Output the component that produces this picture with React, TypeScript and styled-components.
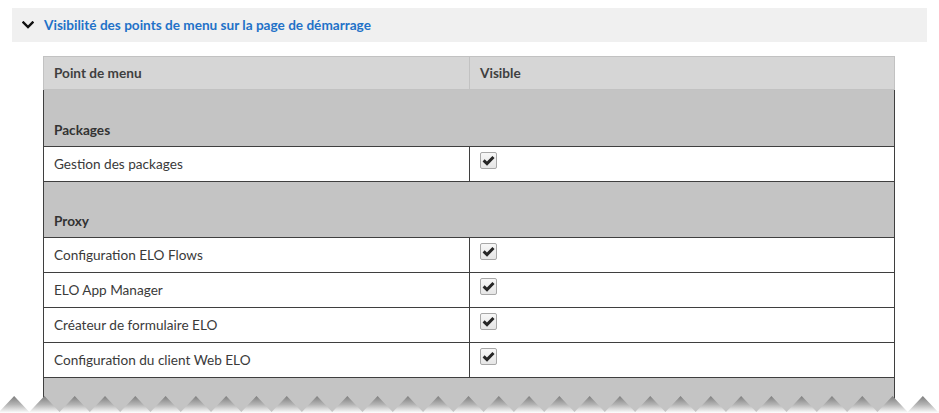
import React from "react";
import styled, { createGlobalStyle } from "styled-components";

const Global = createGlobalStyle`
  html, body { margin: 0; padding: 0; background: #ffffff; }
  body { font-family: "Lato", "Liberation Sans", sans-serif; overflow: hidden; }
`;

const Page = styled.div`
  position: relative;
  width: 939px;
  height: 413px;
  overflow: hidden;
  padding: 8px 12px 0 12px;
  box-sizing: border-box;
`;

const SectionBar = styled.div`
  height: 34px;
  background: #f0f0f0;
  display: flex;
  align-items: center;
  padding-left: 10px;
  gap: 10px;
`;

const SectionTitle = styled.span`
  color: #1f72c8;
  font-size: 13.6px;
  font-weight: 700;
`;

const Table = styled.div`
  margin: 14px 32px 0 31px;
  display: flex;
  flex-direction: column;
`;

const HeadRow = styled.div`
  display: grid;
  grid-template-columns: 426px 1fr;
  height: 34px;
  background: #d6d6d6;
  border: 1px solid #c2c2c2;
  box-sizing: border-box;
`;

const HeadCell = styled.div<{ $divider?: boolean }>`
  display: flex;
  align-items: center;
  padding-left: 10px;
  font-size: 13.6px;
  font-weight: 700;
  color: #3f3f3f;
  border-right: ${(p) => (p.$divider ? "1px solid #c2c2c2" : "none")};
`;

const Body = styled.div`
  border-left: 1px solid #3f3f3f;
  border-right: 1px solid #3f3f3f;
`;

const GroupRow = styled.div`
  height: 56.5px;
  background: #c4c4c4;
  border-bottom: 1px solid #3f3f3f;
  box-sizing: border-box;
  display: flex;
  align-items: flex-end;
  padding: 0 0 8px 10px;
  font-size: 13.6px;
  font-weight: 700;
  color: #333;
`;

const FillerRow = styled.div`
  height: 60px;
  background: #c4c4c4;
`;

const DataRow = styled.div`
  display: grid;
  grid-template-columns: 426px 1fr;
  height: 35px;
  background: #ffffff;
  border-bottom: 1px solid #3f3f3f;
  box-sizing: border-box;
`;

const LabelCell = styled.div`
  display: flex;
  align-items: center;
  padding-left: 10px;
  font-size: 13.6px;
  color: #3a3a3a;
  border-right: 1px solid #3f3f3f;
`;

const CheckCell = styled.div`
  padding: 5px 0 0 10px;
`;

const CheckBox = styled.span`
  display: flex;
  align-items: center;
  justify-content: center;
  width: 17px;
  height: 17px;
  box-sizing: border-box;
  border: 1px solid #a8a8a8;
  border-radius: 2px;
  background: linear-gradient(#f7f7f7, #e6e6e6);
`;

const TornEdge = styled.svg`
  position: absolute;
  left: 0;
  bottom: 0;
  width: 939px;
  height: 17px;
  display: block;
`;

const Chevron = () => (
  <svg width="12" height="8" viewBox="0 0 12 8">
    <polyline points="1.5,1.5 6,6 10.5,1.5" fill="none" stroke="#111" strokeWidth="2.4" strokeLinecap="square" />
  </svg>
);

const Check = () => (
  <svg width="13" height="11" viewBox="0 0 13 11">
    <polyline points="1.6,5.4 5,8.6 11.5,2" fill="none" stroke="#262626" strokeWidth="3" />
  </svg>
);

const groups = [
  { name: "Packages", items: ["Gestion des packages"] },
  {
    name: "Proxy",
    items: [
      "Configuration ELO Flows",
      "ELO App Manager",
      "Créateur de formulaire ELO",
      "Configuration du client Web ELO",
    ],
  },
];

function teeth() {
  const n = 31;
  const w = 939 / n;
  const pts: string[] = [];
  for (let i = 0; i <= n; i++) {
    const x0 = i * w - 1;
    pts.push(`${x0 + w / 2},0`);
    pts.push(`${x0 + w},16`);
  }
  return `0,17 -1,16 ${pts.join(" ")} 939,17`;
}

export default function App() {
  return (
    <>
      <Global />
      <Page>
        <SectionBar>
          <Chevron />
          <SectionTitle>Visibilité des points de menu sur la page de démarrage</SectionTitle>
        </SectionBar>
        <Table>
          <HeadRow>
            <HeadCell $divider>Point de menu</HeadCell>
            <HeadCell>Visible</HeadCell>
          </HeadRow>
          <Body>
            {groups.map((g) => (
              <React.Fragment key={g.name}>
                <GroupRow>{g.name}</GroupRow>
                {g.items.map((it) => (
                  <DataRow key={it}>
                    <LabelCell>{it}</LabelCell>
                    <CheckCell>
                      <CheckBox>
                        <Check />
                      </CheckBox>
                    </CheckCell>
                  </DataRow>
                ))}
              </React.Fragment>
            ))}
            <FillerRow />
          </Body>
        </Table>
        <TornEdge viewBox="0 0 939 17" preserveAspectRatio="none">
          <defs>
            <linearGradient id="tear" x1="0" y1="0" x2="0" y2="1">
              <stop offset="0" stopColor="#7e7e7e" />
              <stop offset="0.5" stopColor="#b4b4b4" />
              <stop offset="1" stopColor="#ffffff" />
            </linearGradient>
          </defs>
          <polygon points={teeth()} fill="url(#tear)" />
        </TornEdge>
      </Page>
    </>
  );
}
